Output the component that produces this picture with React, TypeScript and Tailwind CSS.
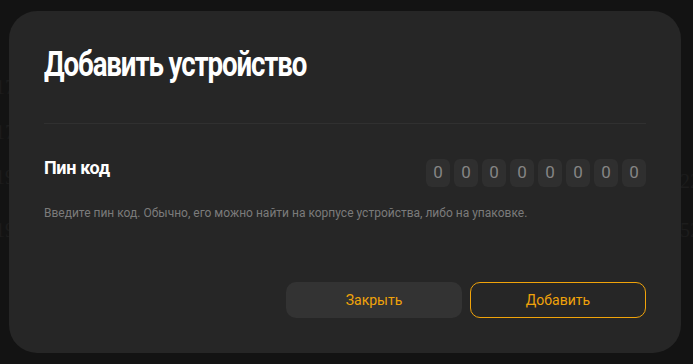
import React from "react";

const pin = ["0", "0", "0", "0", "0", "0", "0", "0"];

function Backdrop() {
	const left = [
		{ t: "17", y: 72 },
		{ t: "17", y: 117 },
		{ t: "19", y: 162 },
		{ t: "19", y: 215 },
	];
	const right = [
		{ t: "22", y: 166 },
		{ t: "52", y: 215 },
	];
	return (
		<div className="absolute inset-0 overflow-hidden font-['Liberation_Serif',serif] text-[20px] text-[#1c1c1c]">
			{left.map((n, i) => (
				<span key={i} className="absolute left-[-5px]" style={{ top: n.y }}>
					{n.t}
				</span>
			))}
			{right.map((n, i) => (
				<span key={i} className="absolute left-[680px]" style={{ top: n.y }}>
					{n.t}
				</span>
			))}
		</div>
	);
}

export default function App() {
	return (
		<div className="relative w-[693px] h-[364px] bg-[#131313] overflow-hidden font-['Roboto',sans-serif]">
			<Backdrop />
			<div className="relative ml-[9px] pt-[11px]">
				<div className="w-[672px] h-[342px] rounded-[28px] bg-[#262626] px-[35px] pt-[34px] flex flex-col">
					<h1 className="text-[35px] leading-[40px] font-bold text-white tracking-[-0.04em] scale-x-[0.79] origin-left whitespace-nowrap">
						Добавить устройство
					</h1>
					<div className="mt-[38px] h-px bg-[#303030]" />
					<div className="mt-[33px] flex items-start justify-between">
						<p className="text-[18px] leading-[21px] font-bold text-white tracking-[-0.02em]">Пин код</p>
						<div className="mt-[2px] flex gap-1">
							{pin.map((d, i) => (
								<div
									key={i}
									className="w-6 h-[28px] rounded-md bg-[#2f2f2f] flex items-center justify-center text-[17px] text-[#858585]"
								>
									{d}
								</div>
							))}
						</div>
					</div>
					<p className="mt-[18px] text-[12px] leading-4 text-[#7b7b7b]">
						Введите пин код. Обычно, его можно найти на корпусе устройства, либо на упаковке.
					</p>
					<div className="mt-auto mb-[35px] flex justify-end gap-2">
						<button
							type="button"
							className="w-[176px] h-9 rounded-[10px] bg-[#333333] text-[14px] text-[#f0a30a]"
						>
							Закрыть
						</button>
						<button
							type="button"
							className="w-[176px] h-9 rounded-[10px] border border-[#f0a30a] text-[14px] text-[#f0a30a]"
						>
							Добавить
						</button>
					</div>
				</div>
			</div>
		</div>
	);
}
